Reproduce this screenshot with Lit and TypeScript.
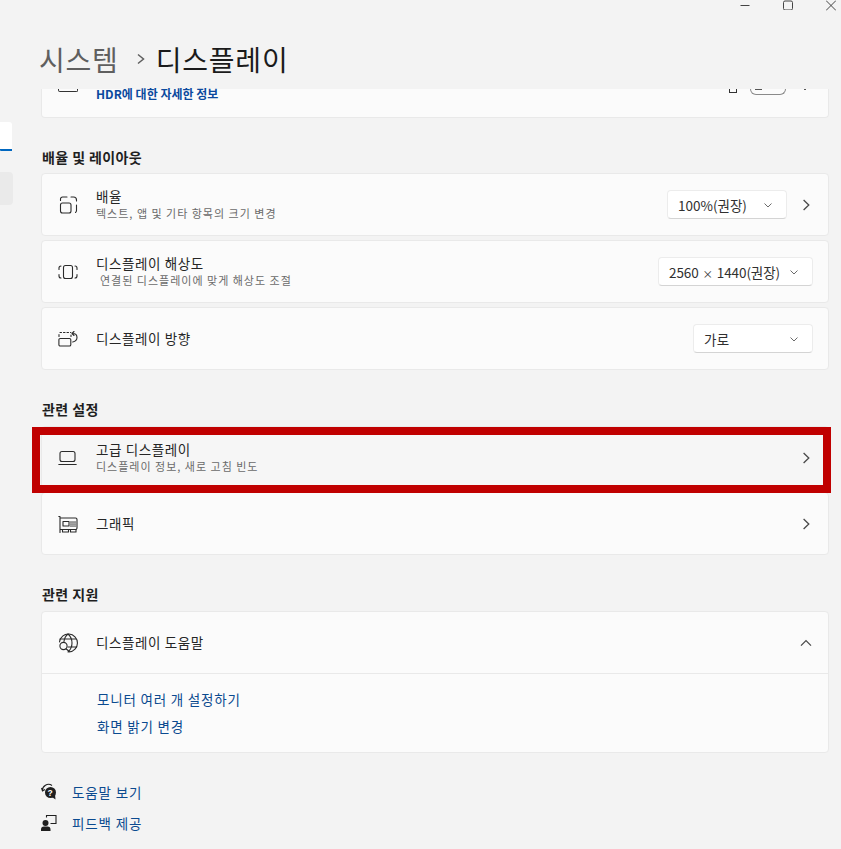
import { LitElement, html, css, svg } from "lit";
import { customElement } from "lit/decorators.js";

const ic = (body: unknown) => html`<svg class="ic" width="20" height="20" viewBox="0 0 20 20" fill="none" stroke="currentColor" stroke-width="1.1" stroke-linecap="round" stroke-linejoin="round">${body}</svg>`;

const chevR = html`<svg class="chev" width="12" height="12" viewBox="0 0 12 12" fill="none" stroke="#4a4a4a" stroke-width="1.3"><path d="M3.6 1 8.8 6 3.6 11"/></svg>`;
const chevD = html`<svg class="dd" width="10" height="10" viewBox="0 0 10 10" fill="none" stroke="#6b6b6b" stroke-width="1"><path d="M1.500 3.500 5 7 8.500 3.500"/></svg>`;
const chevU = html`<svg class="chev" width="12" height="12" viewBox="0 0 12 12" fill="none" stroke="#4a4a4a" stroke-width="1.3"><path d="M1 8.6 6 3.6 11 8.6"/></svg>`;

const scaleIcon = ic(svg`<rect x="2.500" y="8" width="10.500" height="10" rx="2"/><path d="M2.500 5.500V4a2 2 0 0 1 2-2H9M13 2h2.500a3 3 0 0 1 3 3v1M18.500 10v5.500a2.500 2.500 0 0 1-1 2"/>`);
const resIcon = ic(svg`<rect x="5.500" y="3.500" width="9" height="13" rx="2"/><path d="M3 4a2 2 0 0 0-2 2v1.500M1 12.500V14a2 2 0 0 0 2 2M17 4a2 2 0 0 1 2 2v1.500M19 12.500V14a2 2 0 0 1-2 2"/>`);
const orientIcon = ic(svg`<path d="M2.200 9.500h9.300a1.300 1.300 0 0 1 1.300 1.300v4.900a1.300 1.300 0 0 1-1.300 1.300H2.200a1.300 1.300 0 0 1-1.300-1.300v-4.900a1.300 1.300 0 0 1 1.300-1.300z"/><path d="M1 7.500V5.500M2 3.500h1.500M5.500 3.500h1.500M9 3.500h1.500M12.500 3.500h.4M13 7.500V6"/><path d="M14.500 4.500c2.600 0 4.500 1.700 4.500 3.900 0 2.200-1.500 3.900-4.300 4.600M16 2.500 14 4.500l2 2"/>`);
const laptopIcon = ic(svg`<rect x="2" y="3.500" width="15" height="10" rx="2"/><path d="M.8 16.500h17.400"/>`);
const gpuIcon = ic(svg`<path d="M.8 2.500h1.200v16M2 4h15.500a1.500 1.500 0 0 1 1.500 1.500v8.500a1.500 1.500 0 0 1-1.500 1.500H2"/><rect x="5" y="7.500" width="6" height="4.500"/><path d="M12.500 8h5M12.500 10h5M12.500 12h5" stroke-dasharray="1 1"/><path d="M4.500 15.500v2.500h6v-2.500M12.500 15.500v2.500h5.500v-2.500"/>`);
const globeIcon = ic(svg`<path d="M1.500 9A9 9 0 1 1 11 19"/><path d="M10 1C7.500 3 6.300 5.500 6 8.500M10 1c2.800 2.500 4 5.500 4 9s-1.200 6.500-4 9M2 6h16M10 14h8.500"/><circle cx="5.500" cy="13" r="3.600"/><path d="M8 15.800 11.300 18.500"/>`);
const helpIcon = html`<svg class="ic" width="18" height="18" viewBox="0 0 18 18"><path d="M1.500 8a6 6 0 0 1 9.500-5.500M.5 5l1 3 2.500-1.500" fill="none" stroke="#1f1f1f" stroke-width="1.100"/><circle cx="9.500" cy="9.500" r="5.500" fill="#1f1f1f"/><path d="M11 14l3.500 2.500-.5-5z" fill="#1f1f1f"/><text x="9.500" y="12.500" font-size="8.500" font-weight="700" text-anchor="middle" fill="#fff" font-family="Liberation Sans">?</text></svg>`;
const feedbackIcon = html`<svg class="ic" width="18" height="18" viewBox="0 0 18 18"><circle cx="4.500" cy="9" r="3" fill="#1f1f1f"/><path d="M0 17v-1.500a3 3 0 0 1 3-3h3.500a3 3 0 0 1 3 3V17z" fill="#1f1f1f"/><path d="M5.500 3.500V1.500h9.500v8H9.500" fill="none" stroke="#1f1f1f" stroke-width="1.100"/></svg>`;

@customElement("app-root")
export class AppRoot extends LitElement {
  static styles = css`
    :host {
      display: block;
      width: 841px;
      height: 849px;
      overflow: hidden;
      background: #f3f3f3;
      color: #1b1b1b;
      font-family: "Noto Sans CJK KR", "Noto Sans", sans-serif;
      font-size: 13.500px;
    }
    .winbar { display: flex; justify-content: flex-end; height: 12px; margin-right: -11px; }
    .winbar svg { display: block; }
    .wb { width: 43px; height: 12px; display: flex; justify-content: center; flex: none; }
    .top { display: flex; align-items: center; height: 77px; box-sizing: border-box; padding: 16px 0 0 39px; font-size: 28px; line-height: 40px; letter-spacing: .8px; }
    .crumb { color: #5f5f5f; }
    .sep { margin: 0 10px 0 17px; display: flex; }
    .page { display: grid; grid-template-columns: 41px 788px; }
    .side { display: flex; flex-direction: column; padding-top: 33px; gap: 21px; align-items: flex-start; }
    .nav1 { width: 12px; height: 27px; background: #fff; border-bottom: 2px solid #0067c0; border-radius: 0 3px 0 1px; }
    .nav2 { width: 13px; height: 33px; background: #eaeaea; border-radius: 0 4px 4px 0; }
    .col { display: flex; flex-direction: column; }
    .card { background: #fbfbfb; border: 1px solid #e9e9e9; border-radius: 4px; box-sizing: border-box; }
    .clip { height: 29px; border-top: 0; border-radius: 0 0 4px 4px; display: flex; align-items: flex-end; padding: 0 54px 14px 54px; position: relative; }
    .clip .hdr { flex: 1; font-weight: 700; font-size: 12px; line-height: 14px; color: #0b4a9e; position: relative; top: -2px; }
    .stub { position: absolute; left: 16px; top: 0; width: 18px; height: 2px; border: solid #333; border-width: 0 1px 1px; border-radius: 0 0 2px 2px; }
    .stub2 { position: absolute; left: 687px; top: 0; width: 6px; height: 3px; border: solid #333; border-width: 0 1px 1px; }
    .stub3 { position: absolute; left: 708px; top: 0; width: 34px; height: 5px; border: solid #8a8a8a; border-width: 0 1px 1px; border-radius: 0 0 9px 9px; }
    .thumb { position: absolute; left: 713px; top: 0; width: 7px; height: 1px; background: #555; }
    .stub4 { position: absolute; left: 762px; top: 0; width: 2px; height: 1px; background: #555; }
    h2 { margin: 0; padding-left: 1px; font-size: 14px; font-weight: 700; line-height: 20px; color: #1f1f1f; letter-spacing: .4px; }
    .t1 { margin-top: 29px; margin-bottom: 6px; }
    .t2 { margin-top: 29px; margin-bottom: 7px; }
    .t3 { margin-top: 29px; margin-bottom: 7px; }
    .stack { display: flex; flex-direction: column; gap: 4px; }
    .tight { gap: 3px; }
    .row { display: flex; align-items: center; height: 63px; padding: 0 15px 0 16px; }
    .ic { flex: none; color: #2b2b2b; display: block; }
    .row > .ic { margin-right: 18px; }
    .txt { flex: 1; display: flex; flex-direction: column; min-width: 0; letter-spacing: .6px; padding-bottom: 2px; }
    .name { line-height: 16px; color: #262626; }
    .sub { font-size: 11px; line-height: 13px; color: #6a6a6a; margin-top: 3px; letter-spacing: 1px; }
    .ind { padding-left: 4px; }
    .sel { display: flex; align-items: center; justify-content: space-between; height: 29px; box-sizing: border-box; background: #fff; border: 1px solid #ececec; border-bottom-color: #d4d4d4; border-radius: 4px; color: #303030; padding: 0 13px 0 10px; }
    .s1 { width: 120px; margin-right: 13px; }
    .s2 { width: 155px; letter-spacing: -.1px; }
    .s3 { width: 120px; letter-spacing: .3px; }
    .times { font-size: 10.500px; margin: 0 1px; }
    .chev { margin-right: 1px; flex: none; }
    .hl { position: relative; }
    .redbox { position: absolute; left: -9px; right: -2px; top: 1px; bottom: -4px; border: 8px solid #c00000; pointer-events: none; }
    .hl .card { background: #f6f6f6; }
    .help { height: 142px; }
    .help .row { height: 62px; box-sizing: border-box; border-bottom: 1px solid #e9e9e9; }
    .links { display: flex; flex-direction: column; gap: 7px; padding: 15px 0 0 55px; letter-spacing: .8px; }
    .link { color: #0b4a8f; line-height: 20px; }
    .foot { display: flex; flex-direction: column; gap: 11px; margin-top: 29px; letter-spacing: .85px; }
    .fi { display: flex; align-items: center; gap: 13px; height: 20px; }
  `;

  render() {
    return html`
      <div class="winbar">
        <div class="wb"><svg width="10" height="10" viewBox="0 0 10 10" stroke="#444" fill="none"><path d="M.5 5.500h9"/></svg></div>
        <div class="wb"><svg width="10" height="10" viewBox="0 0 10 10" stroke="#444" fill="none"><rect x=".5" y="1" width="9" height="9" rx="1.500"/></svg></div>
        <div class="wb"><svg width="10" height="11" viewBox="0 0 10 11" stroke="#444" fill="none"><path d="M0 .5 10 10.500M10 .5 0 10.500"/></svg></div>
      </div>
      <div class="top">
        <span class="crumb">시스템</span>
        <span class="sep"><svg width="10" height="12" viewBox="0 0 10 12" fill="none" stroke="#5f5f5f" stroke-width="1.500"><path d="M2 1.500 7.500 6 2 10.500"/></svg></span>
        <span>디스플레이</span>
      </div>
      <div class="page">
        <div class="side"><div class="nav1"></div><div class="nav2"></div></div>
        <div class="col">
          <div class="card clip">
            <i class="stub"></i><i class="stub2"></i><i class="stub3"></i><i class="thumb"></i><i class="stub4"></i>
            <span class="hdr">HDR에 대한 자세한 정보</span>
          </div>
          <h2 class="t1">배율 및 레이아웃</h2>
          <div class="stack">
            <div class="card row">${scaleIcon}
              <div class="txt"><span class="name">배율</span><span class="sub">텍스트, 앱 및 기타 항목의 크기 변경</span></div>
              <div class="sel s1"><span>100%(권장)</span>${chevD}</div>${chevR}
            </div>
            <div class="card row">${resIcon}
              <div class="txt"><span class="name">디스플레이 해상도</span><span class="sub ind">연결된 디스플레이에 맞게 해상도 조절</span></div>
              <div class="sel s2"><span>2560 <span class="times">×</span> 1440(권장)</span>${chevD}</div>
            </div>
            <div class="card row">${orientIcon}
              <div class="txt"><span class="name">디스플레이 방향</span></div>
              <div class="sel s3"><span>가로</span>${chevD}</div>
            </div>
          </div>
          <h2 class="t2">관련 설정</h2>
          <div class="stack tight">
            <div class="hl">
              <div class="card row">${laptopIcon}
                <div class="txt"><span class="name">고급 디스플레이</span><span class="sub">디스플레이 정보, 새로 고침 빈도</span></div>
                ${chevR}
              </div>
              <div class="redbox"></div>
            </div>
            <div class="card row">${gpuIcon}
              <div class="txt"><span class="name">그래픽</span></div>${chevR}
            </div>
          </div>
          <h2 class="t3">관련 지원</h2>
          <div class="card help">
            <div class="row">${globeIcon}
              <div class="txt"><span class="name">디스플레이 도움말</span></div>${chevU}
            </div>
            <div class="links"><span class="link">모니터 여러 개 설정하기</span><span class="link">화면 밝기 변경</span></div>
          </div>
          <div class="foot">
            <div class="fi">${helpIcon}<span class="link">도움말 보기</span></div>
            <div class="fi">${feedbackIcon}<span class="link">피드백 제공</span></div>
          </div>
        </div>
      </div>
    `;
  }
}
